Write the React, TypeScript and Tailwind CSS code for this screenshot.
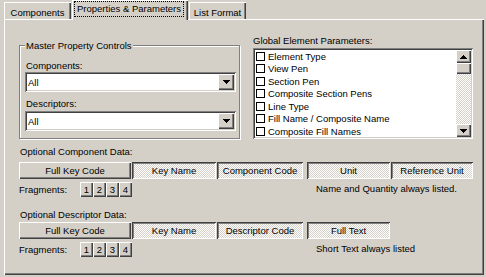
import React from "react";

const raised = "shadow-[inset_1px_1px_#fff,inset_-1px_-1px_#404040,inset_-2px_-2px_#808080]";
const sunken = "shadow-[inset_1px_1px_#808080,inset_-1px_-1px_#fff,inset_2px_2px_#404040,inset_-2px_-2px_#d4d0c8]";
const pressed =
  "shadow-[inset_1px_1px_#404040,inset_-1px_-1px_#fff,inset_2px_2px_#808080] bg-[image:repeating-conic-gradient(#d4d0c8_0_25%,#fff_0_50%)] bg-[length:2px_2px]";
const dither = "bg-[image:repeating-conic-gradient(#d4d0c8_0_25%,#fff_0_50%)] bg-[length:2px_2px]";
const tabShadow = "shadow-[inset_1px_1px_#fff,inset_-1px_0_#404040,inset_-2px_0_#808080]";

function Down() {
  return (
    <svg width="7" height="4" viewBox="0 0 7 4" shapeRendering="crispEdges">
      <path d="M0 0h7v1H0zM1 1h5v1H1zM2 2h3v1H2zM3 3h1v1H3z" fill="#000" />
    </svg>
  );
}

function Up() {
  return (
    <svg width="7" height="4" viewBox="0 0 7 4" shapeRendering="crispEdges">
      <path d="M3 0h1v1H3zM2 1h3v1H2zM1 2h5v1H1zM0 3h7v1H0z" fill="#000" />
    </svg>
  );
}

function Combo() {
  return (
    <div className={`w-[211px] h-[20px] bg-white flex items-center pl-[3px] pr-[2px] ${sunken}`}>
      <span className="flex-1">All</span>
      <div className={`w-[16px] h-[16px] bg-[#d4d0c8] flex items-center justify-center ${raised}`}>
        <Down />
      </div>
    </div>
  );
}

function Btn({ label, w, on, className = "" }: { label: string; w: string; on?: boolean; className?: string }) {
  return (
    <div className={`${w} h-[17px] flex items-center justify-center ${on ? pressed : `bg-[#d4d0c8] ${raised}`} ${className}`}>
      {label}
    </div>
  );
}

function Fragments({ note }: { note: string }) {
  return (
    <div className="flex items-start h-[18px]">
      <div className="w-[61px] mt-[4px]">Fragments:</div>
      <div className="flex mt-[3px]">
        {["1", "2", "3", "4"].map((n) => (
          <div key={n} className={`w-[13px] h-[15px] flex items-center justify-center bg-[#d4d0c8] ${raised}`}>
            {n}
          </div>
        ))}
      </div>
      <div className="ml-[184px] mt-[3px]">{note}</div>
    </div>
  );
}

const items = [
  "Element Type",
  "View Pen",
  "Section Pen",
  "Composite Section Pens",
  "Line Type",
  "Fill Name / Composite Name",
  "Composite Fill Names",
];

export default function App() {
  return (
    <div className="w-[486px] h-[277px] bg-[#d4d0c8] overflow-hidden font-['Liberation_Sans',Arial,sans-serif] text-[9.5px] leading-[13px] text-black">
      <div className="flex items-end h-[19px] pl-[4px]">
        <div className={`w-[67px] h-[17px] pt-[4px] text-center ${tabShadow}`}>Components</div>
        <div className={`relative z-10 ml-[1px] w-[116px] h-[20px] mb-[-1px] bg-[#d4d0c8] pl-[2px] pt-[1px] ${tabShadow}`}>
          <span className="block w-fit h-[16px] border border-dotted border-black px-[2px] leading-[14px]">
            Properties &amp; Parameters
          </span>
        </div>
        <div className={`ml-[1px] w-[57px] h-[17px] pt-[4px] text-center ${tabShadow}`}>List Format</div>
      </div>

      <div className="ml-[4px] w-[480px] h-[256px] pl-[15px] pt-[15px] flex flex-col shadow-[inset_1px_1px_#fff,inset_-1px_-1px_#404040,inset_-2px_-2px_#808080]">
        <div className="flex h-[106px]">
          <div className="w-[221px] h-[94px] mt-[11px] border border-[#808080] shadow-[inset_1px_1px_#fff,1px_1px_#fff] pl-[5px]">
            <div className="mt-[-7px] w-fit px-[1px] bg-[#d4d0c8]">Master Property Controls</div>
            <div className="mt-[7px] ml-[1px]">Components:</div>
            <Combo />
            <div className="mt-[5px] ml-[1px]">Descriptors:</div>
            <div className="mt-[1px]">
              <Combo />
            </div>
          </div>
          <div className="ml-[13px] flex flex-col">
            <div>Global Element Parameters:</div>
            <div className={`mt-[1px] w-[220px] h-[91px] bg-white p-[2px] flex ${sunken}`}>
              <div className="flex-1 overflow-hidden">
                {items.map((t) => (
                  <div key={t} className="h-[12.5px] flex items-center pl-[1px]">
                    <div className="w-[9px] h-[9px] border border-black bg-white" />
                    <span className="ml-[3px] whitespace-nowrap">{t}</span>
                  </div>
                ))}
              </div>
              <div className="w-[15px] flex flex-col">
                <div className={`h-[13px] bg-[#d4d0c8] flex items-center justify-center ${raised}`}>
                  <Up />
                </div>
                <div className={`h-[11px] bg-[#d4d0c8] ${raised}`} />
                <div className={`flex-1 ${dither}`} />
                <div className={`h-[13px] bg-[#d4d0c8] flex items-center justify-center ${raised}`}>
                  <Down />
                </div>
              </div>
            </div>
          </div>
        </div>

        <div className="mt-[5px] ml-[1px]">Optional Component Data:</div>
        <div className="flex mt-[4px]">
          <Btn label="Full Key Code" w="w-[112px]" />
          <Btn label="Key Name" w="w-[84px]" on className="ml-[1px]" />
          <Btn label="Component Code" w="w-[86px]" on className="ml-[1px]" />
          <Btn label="Unit" w="w-[83px]" on className="ml-[4px]" />
          <Btn label="Reference Unit" w="w-[82px]" on className="ml-[1px]" />
        </div>
        <Fragments note="Name and Quantity always listed." />

        <div className="mt-[11px] ml-[1px]">Optional Descriptor Data:</div>
        <div className="flex mt-[1px]">
          <Btn label="Full Key Code" w="w-[112px]" />
          <Btn label="Key Name" w="w-[84px]" on className="ml-[1px]" />
          <Btn label="Descriptor Code" w="w-[86px]" on className="ml-[1px]" />
          <Btn label="Full Text" w="w-[83px]" on className="ml-[4px]" />
        </div>
        <Fragments note="Short Text always listed" />
      </div>
    </div>
  );
}
